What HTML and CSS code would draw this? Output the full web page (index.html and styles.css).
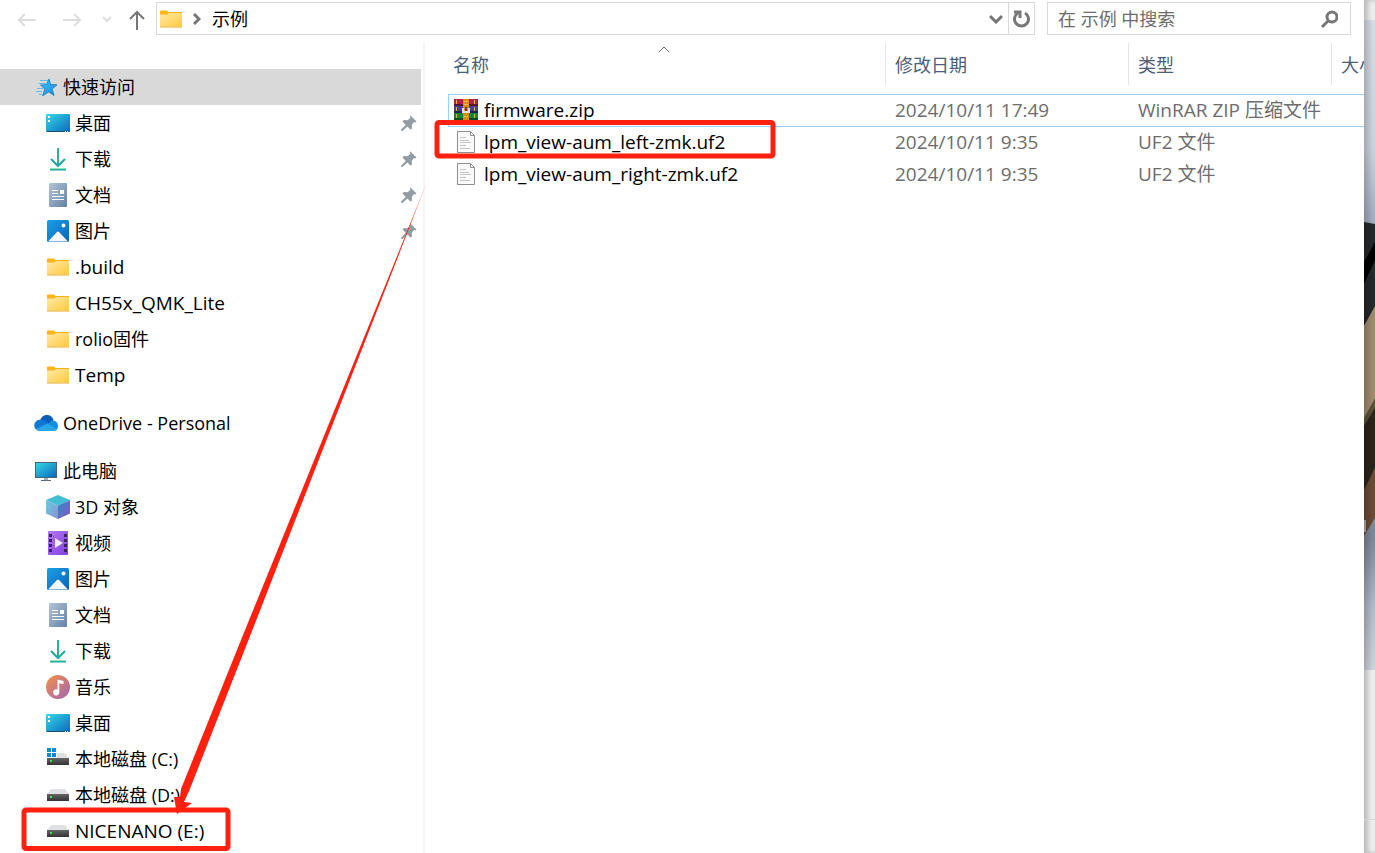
FILE: index.html
```html
<!DOCTYPE html>
<html lang="zh-CN">
<head>
    <meta charset="UTF-8">
    <meta name="viewport" content="width=device-width, initial-scale=1.0">
    <title>示例</title>
    <link rel="stylesheet" href="styles.css">
</head>
<body>
    <svg class="sprite" width="0" height="0" aria-hidden="true">
        <defs>
            <linearGradient id="g-folder" x1="0" y1="0" x2="1" y2="1">
                <stop offset="0" stop-color="#ffe9a6"/><stop offset="1" stop-color="#ffcb3d"/>
            </linearGradient>
            <linearGradient id="g-screen" x1="0" y1="0" x2="1" y2="1">
                <stop offset="0" stop-color="#36dbe6"/><stop offset="1" stop-color="#0a66bd"/>
            </linearGradient>
            <linearGradient id="g-down" x1="0" y1="0" x2="0" y2="1">
                <stop offset="0" stop-color="#35c481"/><stop offset="1" stop-color="#10a3a8"/>
            </linearGradient>
            <linearGradient id="g-doc" x1="0" y1="0" x2="1" y2="1">
                <stop offset="0" stop-color="#b4c5d8"/><stop offset="1" stop-color="#6482a5"/>
            </linearGradient>
            <linearGradient id="g-pic" x1="0" y1="0" x2="1" y2="1">
                <stop offset="0" stop-color="#1ba0e6"/><stop offset="1" stop-color="#0863b8"/>
            </linearGradient>
            <linearGradient id="g-video" x1="0" y1="0" x2="1" y2="1">
                <stop offset="0" stop-color="#b577ef"/><stop offset="1" stop-color="#8040df"/>
            </linearGradient>
            <linearGradient id="g-music" x1="0" y1="0" x2="1" y2="1">
                <stop offset="0" stop-color="#f59147"/><stop offset="1" stop-color="#a264b4"/>
            </linearGradient>
            <linearGradient id="g-cube-l" x1="0" y1="0" x2="1" y2="1">
                <stop offset="0" stop-color="#68cfe3"/><stop offset="1" stop-color="#8b8fd1"/>
            </linearGradient>
            <linearGradient id="g-cube-r" x1="0" y1="0" x2="1" y2="1">
                <stop offset="0" stop-color="#2a8ccb"/><stop offset="1" stop-color="#8b58bd"/>
            </linearGradient>
            <linearGradient id="g-drive" x1="0" y1="0" x2="0" y2="1">
                <stop offset="0" stop-color="#656565"/><stop offset="1" stop-color="#333"/>
            </linearGradient>
            <linearGradient id="g-star" x1="0" y1="0" x2="1" y2="1">
                <stop offset="0" stop-color="#3fc2ff"/><stop offset="1" stop-color="#1689e0"/>
            </linearGradient>
        </defs>

        <symbol id="folder" viewBox="0 0 24 24">
            <path fill="#f9b516" d="M1 4.500a1 1 0 0 1 1-1h6l1.500 1.500H23v4H1z"/>
            <path fill="url(#g-folder)" d="M1 7.500h7.500L10 6h13v13.500H1z"/>
            <path fill="#e9a91e" d="M1 19.500h22v1H1z"/>
        </symbol>
        <symbol id="star" viewBox="0 0 24 24">
            <path stroke="#69b9e8" stroke-width="1" d="M6 5.500h8M5 8.500h7M3 13.500h6M2 16.500h6M5 19.500h3"/>
            <path fill="url(#g-star)" stroke="#1678bd" stroke-width=".8" d="M15 4l1.600 5.400 6.400.4-4.800 4.200 1.800 6.500-5.200-3.600-6.200 3.900 2.200-6.600-4.300-4.300 5.900-.2z"/>
        </symbol>
        <symbol id="desktop" viewBox="0 0 24 24">
            <rect x="0" y="3" width="24" height="18" rx="1" fill="url(#g-screen)"/>
            <path fill="#fff" d="M2 5h2v2H2zM2 9h2v2H2z"/>
            <path fill="#174f7c" d="M1 20h22v1H1z"/>
            <path fill="#cde6f6" d="M19 20h1v1h-1zM21 20h1v1h-1z"/>
        </symbol>
        <symbol id="download" viewBox="0 0 24 24">
            <path fill="#27b78d" d="M11 1h2v18h-2z"/>
            <path fill="none" stroke="#19aa9f" stroke-width="2" d="M5 12l7 7 7-7"/>
            <path fill="url(#g-down)" d="M4 21.500h16v2H4z"/>
        </symbol>
        <symbol id="document" viewBox="0 0 24 24">
            <rect x="3" y="0" width="18" height="24" rx="1" fill="url(#g-doc)"/>
            <path fill="#fff" d="M6 7h6v1H6zM6 10h6v1H6zM14 7h4v4h-4zM6 13h12v1H6zM6 16h12v1H6z"/>
        </symbol>
        <symbol id="picture" viewBox="0 0 24 24">
            <rect x="1" y="1" width="22" height="22" rx="1.500" fill="url(#g-pic)"/>
            <path fill="#f4f8fc" d="M2 22.500l9-9.500a1.400 1.400 0 0 1 2 0l9 9.500z"/>
            <circle cx="17.500" cy="6.500" r="2" fill="#fff"/>
        </symbol>
        <symbol id="video" viewBox="0 0 24 24">
            <rect x="2" y="0" width="20" height="24" rx="1" fill="url(#g-video)"/>
            <path fill="#3b2166" d="M3 3h3v3H3zM3 8h3v3H3zM3 13h3v3H3zM3 18h3v3H3zM18 3h3v3h-3zM18 8h3v3h-3zM18 13h3v3h-3zM18 18h3v3h-3z"/>
            <path fill="#f1eafa" d="M9 7l8 5-8 5z"/>
        </symbol>
        <symbol id="music" viewBox="0 0 24 24">
            <circle cx="12" cy="12" r="12" fill="url(#g-music)"/>
            <path fill="#fff" d="M11.500 4.500l6 1.500v3l-4.200-.8V17a3.100 3.100 0 1 1-1.800-2.500z"/>
        </symbol>
        <symbol id="cube" viewBox="0 0 24 24">
            <path fill="#42bdd3" d="M12 0l12 5-12 5.500L0 5z"/>
            <path fill="url(#g-cube-l)" d="M0 5l12 5.500V24L0 18.500z"/>
            <path fill="url(#g-cube-r)" d="M24 5l-12 5.500V24l12-5.500z"/>
        </symbol>
        <symbol id="computer" viewBox="0 0 24 24">
            <rect x="1.500" y="3.500" width="21" height="15" fill="url(#g-screen)" stroke="#45637a"/>
            <path fill="#a8b1b8" d="M10 19h4v2h-4z"/>
            <path fill="#606b73" d="M7 21h10v1H7z"/>
        </symbol>
        <symbol id="cloud" viewBox="0 0 24 24">
            <path fill="#0a5eb4" d="M6 9.500C7.500 5.500 10 4 13 4c3.500 0 5.700 2 6.500 5l-5 6z"/>
            <path fill="#0f78d4" d="M5.500 20A5.300 5.300 0 0 1 6.200 8.800c2.500-.6 4.500.3 9.300 3.700L9 19z"/>
            <path fill="#1590df" d="M13 14l4.500-4.500C21.500 9 24 11.500 24 15c0 1.500-.5 2.800-1.500 4z"/>
            <path fill="#29a7eb" d="M2 18l11.500-5.500 9.500 6c-.9 1-2 1.500-3.500 1.500h-14c-1.500 0-2.700-.8-3.500-2z"/>
        </symbol>
        <symbol id="drive" viewBox="0 0 24 24">
            <path fill="#dfe1e4" d="M5 6h14l4 5H1z"/>
            <rect x="1" y="11" width="22" height="7" fill="url(#g-drive)"/>
            <path fill="#41df4a" d="M4 13h2v2H4z"/>
        </symbol>
        <symbol id="system-drive" viewBox="0 0 24 24">
            <path fill="#dfe1e4" d="M5 6h14l4 5H1z"/>
            <rect x="1" y="11" width="22" height="7" fill="url(#g-drive)"/>
            <path fill="#41df4a" d="M4 13h2v2H4z"/>
            <path fill="#fff" d="M0 0h11v10.500H0z"/>
            <path fill="#118ad5" d="M1 1h4v4H1zM6 1h4v4H6zM1 6h4v4H1zM6 6h4v4H6z"/>
        </symbol>
        <symbol id="pin" viewBox="0 0 16 16">
            <path fill="#919ca2" d="M9.500.5l6 6-1.200.9-1.300-.4-2.200 2.800.2 3.800-1.500 1L6.500 11.600 1.300 16 0 15.800l.1-1.300L4.800 9.900 1.600 6.500l1.200-1.500 3.900.2 2.700-2.500-.6-1.600z"/>
        </symbol>
        <symbol id="archive" viewBox="0 0 24 24">
            <path fill="#b51f4f" d="M0 1h24v6H0z"/>
            <path fill="#453f9e" d="M0 8h24v6H0z"/>
            <path fill="#138443" d="M0 15h24v7H0z"/>
            <path fill="#531630" d="M0 6h24v2H0z"/>
            <path fill="#25204f" d="M0 13h24v2H0z"/>
            <path fill="#0b4d28" d="M0 20h24v2H0z"/>
            <path fill="#e0b33a" d="M2 2h1v4H2zM2 9h1v4H2zM2 16h1v4H2zM20 2h1v4h-1zM20 9h1v4h-1zM20 16h1v4h-1z"/>
            <path fill="#d98a18" d="M9 1h6v21H9z"/>
            <path fill="#f3bd48" d="M10 3h4v1h-4zM10 6h4v1h-4zM10 18h4v1h-4z"/>
            <path fill="#793c16" d="M11 9h2v6h-2z"/>
            <path fill="none" stroke="#e4e0d8" stroke-width="2" d="M9 10v4h6v-4"/>
        </symbol>
        <symbol id="file" viewBox="0 0 24 24">
            <path fill="#fafafa" stroke="#8e8e8e" d="M3.500 1.500h13l4 4v17h-17z"/>
            <path fill="none" stroke="#8e8e8e" d="M16.500 1.500v4h4"/>
            <path fill="#c4c4c4" d="M6 7h6v1H6zM6 10h9v1H6zM6 12h11v1H6zM6 15h6v1H6zM6 18h10v1H6z"/>
        </symbol>
    </svg>

    <div class="screen">
        <div class="explorer">
            <header class="toolbar">
                <div class="history">
                    <button type="button" class="tool back" aria-label="后退" disabled>
                        <svg width="20" height="18" viewBox="0 0 20 18"><path d="M20 9H3M9 3L3 9l6 6"/></svg>
                    </button>
                    <button type="button" class="tool forward" aria-label="前进" disabled>
                        <svg width="20" height="18" viewBox="0 0 20 18"><path d="M1 9h17M12 3l6 6-6 6"/></svg>
                    </button>
                    <button type="button" class="tool recent" aria-label="最近位置" disabled>
                        <svg width="10" height="8" viewBox="0 0 10 8"><path d="M1 1l4 4 4-4"/></svg>
                    </button>
                    <button type="button" class="tool up" aria-label="上移">
                        <svg width="16" height="20" viewBox="0 0 16 20"><path d="M8 20V2M1 9l7-7 7 7"/></svg>
                    </button>
                </div>
                <div class="address">
                    <svg class="icon"><use href="#folder"/></svg>
                    <svg class="crumb-arrow" width="8" height="12" viewBox="0 0 8 12"><path d="M1 1l5 5-5 5"/></svg>
                    <button type="button" class="crumb">示例</button>
                    <button type="button" class="tool dropdown" aria-label="展开">
                        <svg width="14" height="10" viewBox="0 0 14 10"><path d="M1 2l6 6 6-6"/></svg>
                    </button>
                    <button type="button" class="tool refresh" aria-label="刷新">
                        <svg width="18" height="18" viewBox="0 0 18 18"><path d="M12 3a7 7 0 1 1-7 0"/><path d="M1 2h6v6"/></svg>
                    </button>
                </div>
                <form class="search">
                    <input type="text" aria-label="搜索" placeholder="在 示例 中搜索">
                    <button type="button" class="tool" aria-label="开始搜索">
                        <svg width="18" height="18" viewBox="0 0 18 18"><circle cx="12" cy="7" r="5"/><path d="M8 11l-6 6"/></svg>
                    </button>
                </form>
            </header>

            <div class="content">
                <nav class="sidebar">
                    <ul class="group">
                        <li><a class="root selected" href="#"><svg class="icon"><use href="#star"/></svg>快速访问</a></li>
                        <li><a href="#"><svg class="icon"><use href="#desktop"/></svg>桌面<svg class="pin"><use href="#pin"/></svg></a></li>
                        <li><a href="#"><svg class="icon"><use href="#download"/></svg>下载<svg class="pin"><use href="#pin"/></svg></a></li>
                        <li><a href="#"><svg class="icon"><use href="#document"/></svg>文档<svg class="pin"><use href="#pin"/></svg></a></li>
                        <li><a href="#"><svg class="icon"><use href="#picture"/></svg>图片<svg class="pin"><use href="#pin"/></svg></a></li>
                        <li><a class="latin" href="#"><svg class="icon"><use href="#folder"/></svg>.build</a></li>
                        <li><a class="latin" href="#"><svg class="icon"><use href="#folder"/></svg>CH55x_QMK_Lite</a></li>
                        <li><a href="#"><svg class="icon"><use href="#folder"/></svg>rolio固件</a></li>
                        <li><a class="latin" href="#"><svg class="icon"><use href="#folder"/></svg>Temp</a></li>
                    </ul>
                    <ul class="group">
                        <li><a class="root" href="#"><svg class="icon"><use href="#cloud"/></svg>OneDrive - Personal</a></li>
                    </ul>
                    <ul class="group">
                        <li><a class="root" href="#"><svg class="icon"><use href="#computer"/></svg>此电脑</a></li>
                        <li><a href="#"><svg class="icon"><use href="#cube"/></svg>3D 对象</a></li>
                        <li><a href="#"><svg class="icon"><use href="#video"/></svg>视频</a></li>
                        <li><a href="#"><svg class="icon"><use href="#picture"/></svg>图片</a></li>
                        <li><a href="#"><svg class="icon"><use href="#document"/></svg>文档</a></li>
                        <li><a href="#"><svg class="icon"><use href="#download"/></svg>下载</a></li>
                        <li><a href="#"><svg class="icon"><use href="#music"/></svg>音乐</a></li>
                        <li><a href="#"><svg class="icon"><use href="#desktop"/></svg>桌面</a></li>
                        <li><a href="#"><svg class="icon"><use href="#system-drive"/></svg>本地磁盘 (C:)</a></li>
                        <li><a href="#"><svg class="icon"><use href="#drive"/></svg>本地磁盘 (D:)</a></li>
                        <li><a class="latin" href="#"><svg class="icon"><use href="#drive"/></svg>NICENANO (E:)</a></li>
                    </ul>
                </nav>

                <main class="files">
                    <table>
                        <colgroup>
                            <col class="col-name">
                            <col class="col-date">
                            <col class="col-type">
                            <col>
                        </colgroup>
                        <thead>
                            <tr>
                                <th>名称<svg class="sort" width="12" height="8" viewBox="0 0 12 8"><path d="M1 7l5-5 5 5"/></svg></th>
                                <th>修改日期</th>
                                <th>类型</th>
                                <th>大小</th>
                            </tr>
                        </thead>
                        <tbody>
                            <tr class="focused">
                                <td><a href="#"><svg class="icon"><use href="#archive"/></svg>firmware.zip</a></td>
                                <td>2024/10/11 17:49</td>
                                <td>WinRAR ZIP 压缩文件</td>
                                <td></td>
                            </tr>
                            <tr>
                                <td><a href="#"><svg class="icon"><use href="#file"/></svg>lpm_view-aum_left-zmk.uf2</a></td>
                                <td>2024/10/11 9:35</td>
                                <td>UF2 文件</td>
                                <td></td>
                            </tr>
                            <tr>
                                <td><a href="#"><svg class="icon"><use href="#file"/></svg>lpm_view-aum_right-zmk.uf2</a></td>
                                <td>2024/10/11 9:35</td>
                                <td>UF2 文件</td>
                                <td></td>
                            </tr>
                        </tbody>
                    </table>
                </main>
            </div>

            <!-- copy left firmware to the NICENANO drive -->
            <svg class="markup" width="780" height="853" viewBox="0 0 780 853" aria-hidden="true">
                <defs>
                    <linearGradient id="g-fade" gradientUnits="userSpaceOnUse" x1="430" y1="176" x2="410" y2="226">
                        <stop offset="0" stop-color="#ff2010" stop-opacity=".3"/><stop offset="1" stop-color="#ff2010"/>
                    </linearGradient>
                </defs>
                <rect x="437" y="122.500" width="336" height="33.500" rx="2"/>
                <rect x="24" y="810" width="204" height="38.500" rx="2"/>
                <path fill="url(#g-fade)" d="M428.500 178L396.300 258 241 640 181 789 180 797 174 797 177 814 192 803 184 802 189.500 790 248.500 640 397.600 258z"/>
            </svg>
        </div>

        <!-- edge of the window behind -->
        <div class="behind">
            <svg class="photo" viewBox="0 0 11 650" preserveAspectRatio="none" aria-hidden="true">
                <defs>
                    <linearGradient id="g-wall" x1="0" y1="0" x2="0" y2="1">
                        <stop offset="0" stop-color="#d6dce2"/><stop offset=".2" stop-color="#c9d1dc"/>
                        <stop offset=".3" stop-color="#a5aebf"/><stop offset=".8" stop-color="#7d8796"/>
                        <stop offset=".9" stop-color="#b0b9c7"/><stop offset="1" stop-color="#ced3da"/>
                    </linearGradient>
                    <linearGradient id="g-shadow" x1="0" y1="0" x2="1" y2="0">
                        <stop offset="0" stop-color="#000" stop-opacity=".2"/><stop offset=".8" stop-color="#000" stop-opacity="0"/>
                    </linearGradient>
                </defs>
                <path fill="url(#g-wall)" d="M0 0h11v650H0z"/>
                <path fill="#262728" d="M0 202l11 2v84L0 306z"/>
                <path fill="#000" d="M0 242l11-20v18L0 264z"/>
                <path fill="#9f8a6e" d="M0 306l11-20v92L0 398z"/>
                <path fill="#5a5137" d="M0 398l11-20v14L0 410z"/>
                <path fill="#2b2419" d="M0 406l11-18v60L0 472z"/>
                <path fill="#6c4937" d="M0 470l11-22v50L0 516z"/>
                <path fill="#b7aa9d" d="M0 500h2v12H0z"/>
                <path fill="url(#g-shadow)" d="M0 0h11v650H0z"/>
            </svg>
            <div class="lower"></div>
        </div>
    </div>
</body>
</html>
```
FILE: styles.css
```css
* {
    box-sizing: border-box;
}

body {
    margin: 0;
    font-family: "Open Sans", "Noto Sans CJK SC", sans-serif;
    font-size: 18px;
    line-height: 24px;
    color: #000;
    background-color: #fff;
}

a {
    color: inherit;
    text-decoration: none;
}

button {
    padding: 0;
    border: none;
    background: none;
    font: inherit;
    color: inherit;
}

.sprite {
    position: absolute;
}

.screen {
    display: flex;
    min-height: 100vh;
    overflow: hidden;
}

.explorer {
    position: relative;
    flex: 1;
    min-width: 0;
}

.icon {
    width: 24px;
    height: 24px;
    flex-shrink: 0;
}

/* toolbar */
.toolbar {
    display: flex;
    height: 43px;
    padding: 2px 13px 8px 16px;
}

.history {
    display: flex;
    align-items: center;
    width: 140px;
    padding-top: 2px;
}

.tool {
    display: flex;
    align-items: center;
    justify-content: center;
}

.tool path,
.tool circle,
.crumb-arrow path {
    fill: none;
    stroke: #777;
    stroke-width: 2;
}

.tool:disabled path {
    stroke: #ddd;
}

.forward {
    margin-left: 26px;
}

.recent {
    margin-left: 20px;
}

.up {
    margin-left: 17px;
}

.address {
    display: flex;
    flex: 1;
    align-items: center;
    padding-left: 2px;
    border: 1px solid #d9d9d9;
}

.crumb-arrow {
    margin: 0 11px 0 10px;
}

.crumb-arrow path,
.dropdown path,
.refresh path,
.search circle,
.search path {
    stroke-width: 3;
}

.dropdown {
    margin-left: auto;
    width: 24px;
    height: 100%;
}

.refresh {
    width: 26px;
    height: 100%;
    border-left: 1px solid #d9d9d9;
}

.search {
    display: flex;
    width: 304px;
    margin-left: 12px;
    border: 1px solid #d9d9d9;
}

.search input {
    flex: 1;
    min-width: 0;
    padding: 0 10px;
    border: none;
    outline: none;
    font: inherit;
}

.search input::placeholder {
    color: #6d6d6d;
}

.search .tool {
    width: 42px;
}

/* folders */
.content {
    display: flex;
}

.sidebar {
    width: 425px;
    min-height: calc(100vh - 43px);
    padding: 26px 2px 0 0;
    border-right: 2px solid #f5f5f5;
}

.group {
    margin: 0 0 12px;
    padding: 0;
    list-style: none;
}

.group:last-child {
    margin-bottom: 0;
}

.group a {
    display: flex;
    align-items: center;
    gap: 5px;
    height: 36px;
    padding: 0 4px 0 46px;
}

.group a.root {
    padding-left: 34px;
}

.group a.selected {
    background-color: #d9d9d9;
}

.group a.latin {
    font-size: 19px;
}

.pin {
    width: 16px;
    height: 16px;
    margin-left: auto;
}

/* file list */
.files {
    flex: 1;
    min-width: 0;
    padding-left: 23px;
    overflow: hidden;
}

table {
    width: 100%;
    table-layout: fixed;
    border-collapse: separate;
    border-spacing: 0;
}

.col-name {
    width: 438px;
}

.col-date {
    width: 243px;
}

.col-type {
    width: 203px;
}

th,
td {
    padding: 0 0 0 9px;
    text-align: left;
    font-weight: normal;
    white-space: nowrap;
    overflow: hidden;
}

th {
    position: relative;
    height: 42px;
    padding-top: 2px;
    border-right: 1px solid #e5e5e5;
    color: #4c607a;
}

th:first-child {
    padding-left: 5px;
}

th:last-child {
    border-right: none;
}

.sort {
    position: absolute;
    top: 2px;
    left: 210px;
}

.sort path {
    fill: none;
    stroke: #666;
}

tbody::before {
    content: "";
    display: block;
    height: 9px;
}

td {
    height: 32px;
    padding-bottom: 2px;
    font-size: 19px;
    color: #6d6d6d;
}

td:first-child {
    padding-left: 6px;
}

td a {
    display: flex;
    align-items: center;
    gap: 6px;
    color: #000;
}

.focused td {
    height: 33px;
    border-top: 1px solid #99d1ff;
    border-bottom: 1px solid #99d1ff;
}

.focused td:first-child {
    padding-left: 5px;
    border-left: 1px solid #99d1ff;
}

.markup {
    position: absolute;
    top: 0;
    left: 0;
    pointer-events: none;
}

.markup rect {
    fill: none;
    stroke: #ff2010;
    stroke-width: 5;
}

/* window behind */
.behind {
    display: flex;
    flex-direction: column;
    width: 11px;
    padding-top: 20px;
    background-color: #eee;
    box-shadow: inset 4px 0 5px #bbb;
}

.photo {
    width: 11px;
    height: 650px;
}

.lower {
    height: 150px;
    border-bottom: 1px solid #d5d5d5;
}
```
